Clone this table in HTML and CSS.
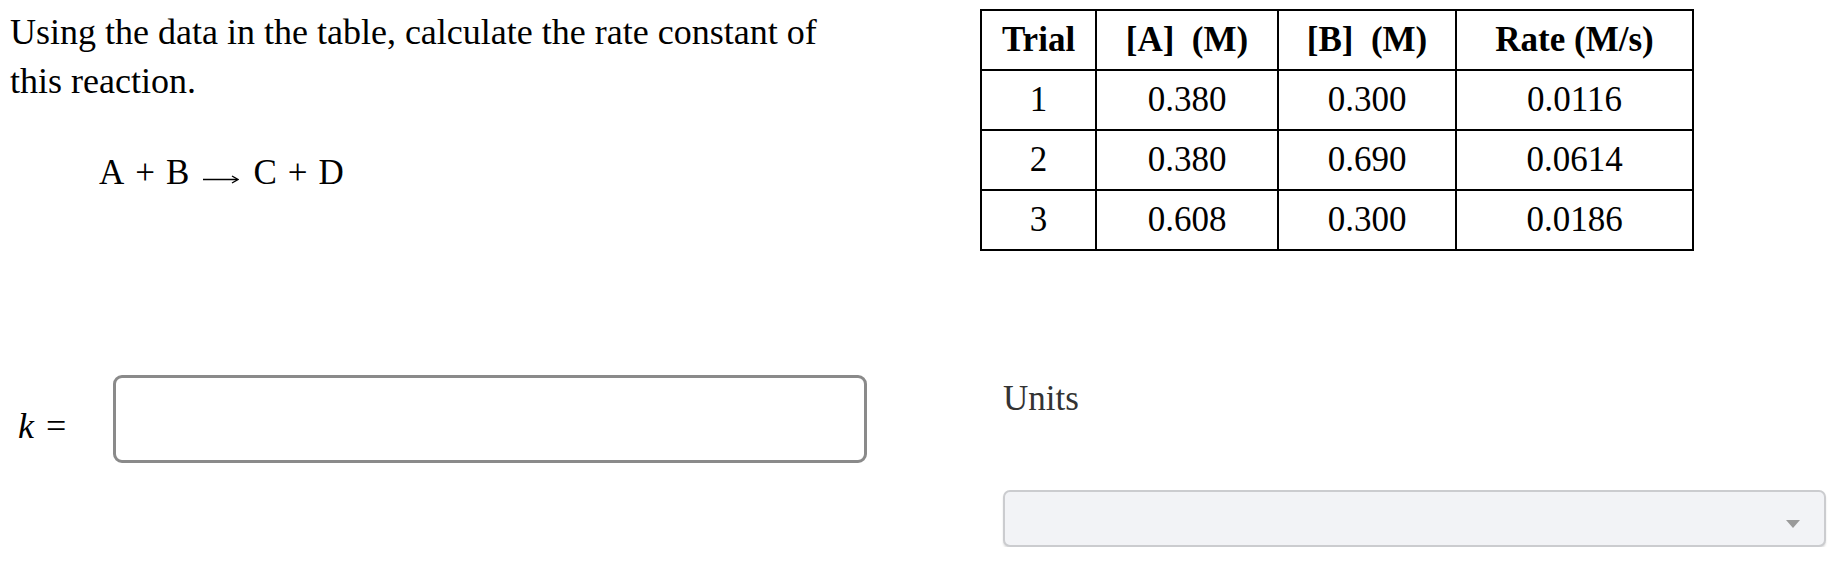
FILE: index.html
```html
<!DOCTYPE html>
<html>
<head>
<meta charset="utf-8">
<link rel="stylesheet" href="styles.css">
</head>
<body>
<div class="top">
  <div class="question">
    <p class="prompt">Using the data in the table, calculate the rate constant of this reaction.</p>
    <div class="equation">
      <span>A</span><span class="op">+</span><span>B</span>
      <svg class="arrow" width="36" height="10" viewBox="0 0 36 10"><line x1="0" y1="5.5" x2="34" y2="5.5" stroke="#000" stroke-width="1.6"/><path d="M29 2 L35 5.5 L29 9" fill="none" stroke="#000" stroke-width="1.4"/></svg>
      <span>C</span><span class="op">+</span><span>D</span>
    </div>
  </div>
  <table class="data">
    <colgroup>
      <col class="c1"><col class="c2"><col class="c3"><col class="c4">
    </colgroup>
    <tr><th>Trial</th><th>[A]&nbsp; (M)</th><th>[B]&nbsp; (M)</th><th>Rate (M/s)</th></tr>
    <tr><td>1</td><td>0.380</td><td>0.300</td><td>0.0116</td></tr>
    <tr><td>2</td><td>0.380</td><td>0.690</td><td>0.0614</td></tr>
    <tr><td>3</td><td>0.608</td><td>0.300</td><td>0.0186</td></tr>
  </table>
</div>
<div class="answer">
  <div class="answer-left">
    <div class="label"><span class="var">k</span><span class="eq">=</span></div>
    <div class="input"></div>
  </div>
  <div class="units">
    <div class="units-label">Units</div>
    <div class="select"><span class="caret"></span></div>
  </div>
</div>
</body>
</html>
```
FILE: styles.css
```css
body {
  margin: 8px;
  font-family: "Liberation Serif", "Times New Roman", serif;
  color: #000;
  background: #fff;
}
.top {
  display: flex;
  align-items: flex-start;
}
.question {
  width: 972px;
  flex: none;
}
.prompt {
  margin: 0;
  padding-left: 2px;
  width: 850px;
  font-size: 36px;
  line-height: 49px;
}
.equation {
  margin-top: 42px;
  margin-left: 91px;
  display: flex;
  align-items: baseline;
  gap: 11px;
  font-size: 35px;
  line-height: 49px;
}
.arrow {
  align-self: center;
  margin: 0 3px;
  position: relative;
  top: 6px;
}
.data {
  border-collapse: collapse;
  margin-top: 1px;
  table-layout: fixed;
  width: 712px;
  font-size: 35px;
}
.c1 { width: 115px; }
.c2 { width: 182px; }
.c3 { width: 178px; }
.c4 { width: 237px; }
.data th, .data td {
  border: 2px solid #000;
  height: 58px;
  padding: 0;
  text-align: center;
  vertical-align: middle;
  line-height: 40px;
}
.data th {
  font-weight: bold;
}
.answer {
  display: flex;
  align-items: flex-start;
  margin-top: 124px;
}
.answer-left {
  width: 972px;
  flex: none;
  display: flex;
  align-items: center;
}
.label {
  padding-top: 15px;
  margin-left: 10px;
  font-size: 36px;
  line-height: 49px;
  display: flex;
  align-items: baseline;
}
.var {
  font-style: italic;
}
.eq {
  margin-left: 12px;
}
.input {
  margin-left: 47px;
  width: 748px;
  height: 82px;
  border: 3px solid #8a8a8a;
  border-radius: 9px;
  background: #fff;
}
.units {
  padding-left: 23px;
}
.units-label {
  font-size: 35px;
  line-height: 36px;
  color: #333;
  margin-top: 6px;
}
.select {
  margin-top: 73px;
  border: 2px solid #cbcccf;
  border-radius: 7px;
  background: #f2f3f6;
  box-shadow: 0 2px 2px rgba(0, 0, 0, 0.12);
  display: flex;
  justify-content: flex-end;
  align-items: flex-end;
  padding: 0 24px 17px 0;
  box-sizing: border-box;
  height: 57px;
  width: 823px;
}
.caret {
  width: 0;
  height: 0;
  border-left: 7px solid transparent;
  border-right: 7px solid transparent;
  border-top: 8px solid #9a9a9a;
}
```
